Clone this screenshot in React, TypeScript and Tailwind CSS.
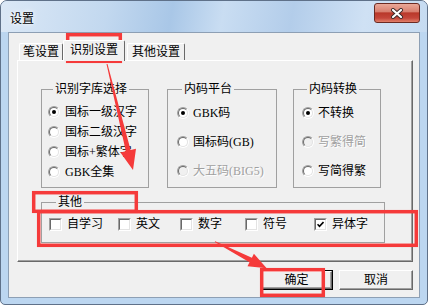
import React from "react"

const Radio = ({ checked = false, disabled = false }: { checked?: boolean; disabled?: boolean }) => (
  <span className="flex h-[12px] w-[12px] shrink-0 rounded-full border border-t-[#a0a0a0] border-l-[#a0a0a0] border-r-white border-b-white">
    <span
      className={`flex flex-1 items-center justify-center rounded-full border border-t-[#696969] border-l-[#696969] border-r-[#e3e3e3] border-b-[#e3e3e3] ${disabled ? "bg-[#f0f0f0]" : "bg-white"}`}
    >
      {checked && <span className="h-[4px] w-[4px] rounded-full bg-black" />}
    </span>
  </span>
)

const Check = ({ checked = false }: { checked?: boolean }) => (
  <span className="flex h-[13px] w-[13px] shrink-0 border border-t-[#a0a0a0] border-l-[#a0a0a0] border-r-white border-b-white">
    <span className="flex flex-1 items-center justify-center border border-t-[#696969] border-l-[#696969] border-r-[#e3e3e3] border-b-[#e3e3e3] bg-white">
      {checked && (
        <svg width="7" height="7" viewBox="0 0 7 7">
          <path d="M0.5 3.2 L2.5 5.3 L6.5 1" fill="none" stroke="#000" strokeWidth="1.6" />
        </svg>
      )}
    </span>
  </span>
)

const Option = ({
  label,
  checked = false,
  disabled = false,
  gap = "gap-[5px]",
}: {
  label: string
  checked?: boolean
  disabled?: boolean
  gap?: string
}) => (
  <div className={`flex h-[20px] items-center ${gap}`}>
    <Radio checked={checked} disabled={disabled} />
    <span className={disabled ? "text-[#a0a0a0] [text-shadow:1px_1px_0_#fff]" : ""}>{label}</span>
  </div>
)

const Tab = ({ label, active = false, width }: { label: string; active?: boolean; width: string }) => (
  <div
    className={`flex items-center justify-center rounded-t-[2px] border-l border-t border-r border-l-white border-t-white border-r-[#696969] bg-[#f0f0f0] ${width} ${
      active ? "-mb-px h-[21px] pb-[2px]" : "h-[17px]"
    }`}
  >
    {label}
  </div>
)

const Box = ({ label, checked = false, width }: { label: string; checked?: boolean; width: string }) => (
  <div className={`flex items-center gap-[5px] ${width}`}>
    <Check checked={checked} />
    <span>{label}</span>
  </div>
)

export default function App() {
  return (
    <div className="relative h-[305px] w-[428px] overflow-hidden bg-white font-['Liberation_Serif','Noto_Sans_CJK_SC',serif] text-[12px] leading-[14px] text-black">
      <div className="flex h-full flex-col rounded-t-[7px] rounded-b-[5px] border border-[#5f7189] bg-[#bcd6f0]">
        {/* title bar */}
        <div className="flex h-[31px] rounded-t-[6px] bg-[linear-gradient(100deg,#dbe8f6_0%,#c2d8ef_25%,#a9c7e7_40%,#c9ddf2_52%,#b3cdea_68%,#cfe1f4_85%,#c6dbf1_100%)]">
          <span className="ml-[9px] mt-[11px] [text-shadow:0_0_6px_#fff,0_0_3px_#fff]">设置</span>
          <div className="ml-auto mr-[7px] mt-[2px] flex h-[20px] w-[46px] items-center justify-center rounded-[3px] border border-[#6b2a22] bg-[linear-gradient(180deg,#eaa898_0%,#d88070_42%,#b9382a_50%,#c4463a_78%,#e2806a_100%)]">
            <svg width="14" height="11" viewBox="0 0 14 11">
              <path d="M3 2 L11 9 M11 2 L3 9" stroke="#3b2a2a" strokeWidth="4" strokeLinecap="round" />
              <path d="M3 2 L11 9 M11 2 L3 9" stroke="#fff" strokeWidth="2.2" strokeLinecap="round" />
            </svg>
          </div>
        </div>

        {/* client area */}
        <div className="mx-[7px] flex h-[266px] flex-col border border-[#8d9fb4] bg-[#f0f0f0] pl-[8px] pr-[6px] pt-[7px]">
          <div className="relative z-10 flex h-[20px] items-end pl-[2px]">
            <Tab label="笔设置" width="w-[44px]" />
            <Tab label="识别设置" width="w-[62px] mr-[2px]" active />
            <Tab label="其他设置" width="w-[58px]" />
          </div>

          <div className="flex h-[202px] flex-col border border-t-white border-l-white border-r-[#696969] border-b-[#696969] pl-[23px] pt-[21px] shadow-[inset_-1px_-1px_0_#a0a0a0]">
            <div className="flex">
              <fieldset className="h-[106px] w-[108px] border border-[#a0a0a0] pl-[6px]">
                <legend className="ml-[5px] px-[2px]">识别字库选择</legend>
                <div className="flex flex-col pt-[6px]">
                  <Option label="国标一级汉字" checked />
                  <Option label="国标二级汉字" />
                  <Option label="国标+繁体字" />
                  <Option label="GBK全集" />
                </div>
              </fieldset>

              <fieldset className="ml-[18px] h-[106px] w-[110px] border border-[#a0a0a0] pl-[9px]">
                <legend className="ml-[5px] px-[2px]">内码平台</legend>
                <div className="flex flex-col gap-[9px] pt-[7px]">
                  <Option label="GBK码" checked gap="gap-[4px]" />
                  <Option label="国标码(GB)" gap="gap-[4px]" />
                  <Option label="大五码(BIG5)" disabled gap="gap-[4px]" />
                </div>
              </fieldset>

              <fieldset className="ml-[16px] h-[106px] w-[88px] border border-[#a0a0a0] pl-[8px]">
                <legend className="ml-[5px] px-[2px]">内码转换</legend>
                <div className="flex flex-col gap-[9px] pt-[7px]">
                  <Option label="不转换" checked gap="gap-[4px]" />
                  <Option label="写繁得简" disabled gap="gap-[4px]" />
                  <Option label="写简得繁" gap="gap-[4px]" />
                </div>
              </fieldset>
            </div>

            <fieldset className="mt-[7px] h-[48px] w-[340px] border border-[#a0a0a0] pl-[7px]">
              <legend className="ml-[7px] px-[2px]">其他</legend>
              <div className="flex pt-[8px]">
                <Box label="自学习" width="w-[69px]" />
                <Box label="英文" width="w-[62px]" />
                <Box label="数字" width="w-[65px]" />
                <Box label="符号" width="w-[69px]" />
                <Box label="异体字" checked width="w-[70px]" />
              </div>
            </fieldset>
          </div>

          <div className="mt-[8px] flex justify-end gap-[6px]">
            <button className="h-[20px] w-[73px] border border-black bg-[#f0f0f0]">
              <span className="flex h-full items-center justify-center border border-t-white border-l-white border-r-[#696969] border-b-[#696969] shadow-[inset_-1px_-1px_0_#a0a0a0]">
                确定
              </span>
            </button>
            <button className="flex h-[20px] w-[74px] items-center justify-center border border-t-white border-l-white border-r-[#696969] border-b-[#696969] bg-[#f0f0f0] shadow-[inset_-1px_-1px_0_#a0a0a0]">
              取消
            </button>
          </div>
        </div>
      </div>

      {/* red annotations */}
      <svg className="pointer-events-none absolute inset-0" width="428" height="305" viewBox="0 0 428 305">
        <g fill="none" stroke="#f53a3a" strokeWidth="3.5">
          <rect x="67.7" y="34.7" width="52.6" height="26.6" />
          <rect x="33.7" y="192.7" width="102.6" height="18.6" />
          <rect x="38.7" y="211.7" width="377.6" height="33.6" />
          <rect x="261.7" y="269.7" width="61.6" height="25.6" />
        </g>
        <g fill="#f53a3a">
          <polygon points="106.5,64.1 107.5,63.9 130.6,150 136,148.7 133,170 120.4,152.5 125.8,151.2" />
          <polygon points="214.8,242.1 215.2,241.3 251.9,257.8 253.9,253.8 266.7,268.3 247.5,266.2 249.5,262.2" />
        </g>
      </svg>
    </div>
  )
}
